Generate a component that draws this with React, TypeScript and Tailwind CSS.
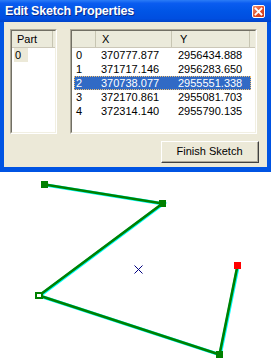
import React from "react";

const rows = [
  ["0", "370777.877", "2956434.888"],
  ["1", "371717.146", "2956283.650"],
  ["2", "370738.077", "2955551.338"],
  ["3", "372170.861", "2955081.703"],
  ["4", "372314.140", "2955790.135"],
];

function Sunken({ className, children }: { className: string; children: React.ReactNode }) {
  return (
    <div className={`border-t border-l border-t-[#aca899] border-l-[#aca899] border-b border-r border-b-white border-r-white ${className}`}>
      <div className="w-full h-full border-t border-l border-t-[#716f64] border-l-[#716f64] border-b border-r border-b-[#f1efe2] border-r-[#f1efe2] bg-white overflow-hidden">
        {children}
      </div>
    </div>
  );
}

export default function App() {
  const pts = "44.5,184.5 162.5,203.5 39,295.5 219.5,354.5 237.5,265.5";
  return (
    <div className="w-[271px] h-[358px] bg-white overflow-hidden text-black" style={{ fontFamily: '"Liberation Sans", Arial, sans-serif' }}>
      {/* Window */}
      <div className="w-[271px] h-[172px] flex flex-col bg-[#0054e3]">
        {/* Title bar */}
        <div className="h-[22px] flex items-center justify-between pl-[5px] pr-[6px] bg-[linear-gradient(to_bottom,#2b7cf6_0%,#0a5cf0_15%,#0055e6_50%,#004ee0_85%,#0043c8_100%)]">
          <span className="text-white font-bold text-[12.5px] tracking-[-0.2px] leading-none [text-shadow:1px_1px_0_#0a2a8a]">Edit Sketch Properties</span>
          <div className="w-[13px] h-[13px] rounded-[2px] border border-white bg-[linear-gradient(135deg,#f09070,#e04a24_60%,#c8381a)] flex items-center justify-center">
            <svg width="9" height="9" viewBox="0 0 9 9">
              <path d="M1.5 1.5 L7.5 7.5 M7.5 1.5 L1.5 7.5" stroke="white" strokeWidth="1.8" strokeLinecap="square" />
            </svg>
          </div>
        </div>
        {/* Body */}
        <div className="flex-1 mx-[4px] mb-[5px] bg-[#ece9d8] flex flex-col text-[11px] leading-none">
          <div className="flex pt-[7px] pl-[6px]">
            <Sunken className="w-[47px] h-[105px]">
              <div className="h-[17px] flex border-b border-b-[#cbc7b8] bg-[#ebeadb]">
                <div className="w-[41px] h-full flex items-center pl-[5px] border-r border-r-[#c7c5b2]">Part</div>
              </div>
              <div className="mt-[0px] h-[14px] w-[14px] ml-[2px] bg-[#ece9d8] flex items-center pl-[1px]">0</div>
            </Sunken>
            <Sunken className="w-[187px] h-[105px] ml-[13px]">
              <div className="h-[17px] flex border-b border-b-[#cbc7b8] bg-[#ebeadb]">
                <div className="w-[24px] h-full border-r border-r-[#c7c5b2]" />
                <div className="w-[76px] h-full flex items-center pl-[6px] border-r border-r-[#c7c5b2]">X</div>
                <div className="w-[78px] h-full flex items-center pl-[8px] border-r border-r-[#c7c5b2]">Y</div>
              </div>
              <div className="flex flex-col">
                {rows.map((r, i) => {
                  const sel = i === 2;
                  return (
                    <div
                      key={i}
                      className={`h-[14px] flex items-center ml-[2px] w-[177px] ${sel ? "bg-[#316ac5] text-white outline-1 outline-dotted outline-[#f0c070] -outline-offset-1" : ""}`}
                    >
                      <div className="w-[22px] pl-[2px]">{r[0]}</div>
                      <div className="w-[76px] pl-[5px]">{r[1]}</div>
                      <div className="pl-[6px]">{r[2]}</div>
                    </div>
                  );
                })}
              </div>
            </Sunken>
          </div>
          <div className="flex justify-end pr-[8px] mt-[7px]">
            <div className="w-[98px] h-[22px] border-t border-l border-t-white border-l-white border-b border-r border-b-[#404040] border-r-[#404040]">
              <div className="w-full h-full border-b border-r border-b-[#aca899] border-r-[#aca899] flex items-center justify-center bg-[#ece9d8]">
                Finish Sketch
              </div>
            </div>
          </div>
        </div>
      </div>
      {/* Canvas */}
      <svg width="271" height="186" viewBox="0 172 271 186" className="block">
        <polyline points={pts} fill="none" stroke="#00ffff" strokeWidth="3.4" strokeLinejoin="miter" transform="translate(0.6,0.4)" />
        <polyline points={pts} fill="none" stroke="#008000" strokeWidth="2.6" strokeLinejoin="miter" />
        <rect x="41" y="181" width="7" height="7" fill="#008000" />
        <rect x="159" y="200" width="7" height="7" fill="#008000" />
        <rect x="36" y="293" width="6" height="5" fill="white" stroke="#008000" strokeWidth="2" />
        <rect x="216" y="351" width="7" height="7" fill="#008000" />
        <rect x="234" y="262" width="7" height="7" fill="#ff0000" />
        <path d="M134.5 265.5 L142.5 273.5 M142.5 265.5 L134.5 273.5" stroke="#000080" strokeWidth="1" />
      </svg>
    </div>
  );
}
